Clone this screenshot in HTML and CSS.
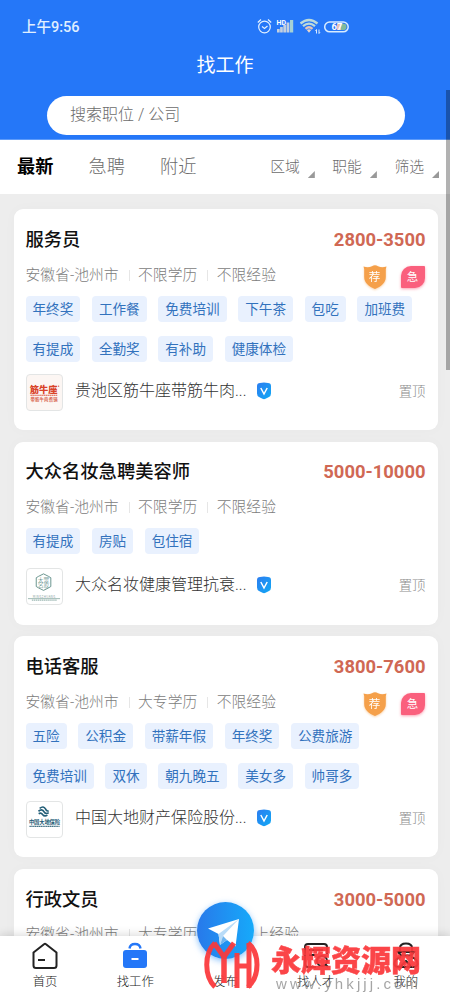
FILE: index.html
```html
<!DOCTYPE html>
<html lang="zh-CN">
<head>
<meta charset="utf-8">
<title>找工作</title>
<link rel="stylesheet" href="styles.css">
</head>
<body>
<svg class="defs" width="0" height="0" aria-hidden="true">
  <defs>
    <linearGradient id="vg" x1="0" y1="0" x2="1" y2="1"><stop offset="0" stop-color="#2d7df0"/><stop offset="1" stop-color="#10a9f5"/></linearGradient>
    <symbol id="verified" viewBox="0 0 16 18"><path d="M1 4Q1 1.2 4 1Q8 .2 12 1Q15 1.2 15 4V11.500Q15 13.800 13 15L9.500 16.800Q8 17.500 6.500 16.800L3 15Q1 13.800 1 11.500Z" fill="url(#vg)"/><path d="M4.800 6L8 12L11.200 6" fill="none" stroke="#fff" stroke-width="1.500"/></symbol>
    <symbol id="shield" viewBox="0 0 24 24"><path d="M.5 1.500Q5 3 9 1.300Q12-.7 15 1.300Q19 3 23.500 1.500L22.800 4V12C22.800 18 18 21.500 12 24C6 21.500 1.200 18 1.200 12V4Z" fill="#f5a04a"/></symbol>
  </defs>
</svg>
<div class="screen">
  <header class="header">
    <div class="status">
      <span class="clock">上午9:56</span>
      <svg class="status-icons" width="94" height="17" viewBox="0 0 94 17">
        <g fill="none" stroke="#e4f1ff" stroke-width="1.200"><circle cx="7.500" cy="9" r="5.800"/><path d="M.8 4.500L4 1.500M14.200 4.500L11 1.500M5 8.500L7.500 10.500L10.500 8"/></g>
        <g fill="#c4d0df"><path d="M20 11h2.700v3.500H20zM23.100 9h2.700v5.500h-2.700zM26.300 7h2.800v7.500h-2.800zM29.600 4.500h2.800v10h-2.800z"/><path fill="#a5d1d5" d="M33 2h3.200v12.500h-3.200z"/></g>
        <text x="19.500" y="6.500" class="hd">HD</text>
        <g fill="none" stroke="#bcdada" stroke-width="2.300"><path d="M43.500 5.500Q52-1.500 60.500 5.500"/><path d="M46 8.200Q52 3 58 8.200"/><path d="M48.500 10.800Q52 7.800 55.500 10.800" stroke="#e4c7b8"/></g><path d="M49.800 12L52 14.800L54.200 12Q52 10.500 49.800 12" fill="#e9d4c8"/>
        <path d="M59.500 15.500v-4l-1 1.300M62 11.500v4l1-1.300" stroke="#dcecff" fill="none"/>
        <rect x="67.700" y="4" width="23.500" height="9.800" rx="4.900" fill="none" stroke="#d8ecff" stroke-width="1.500"/><path d="M80 5.800h4v6.200h-4z" fill="#e5c1b5"/><path d="M84 5.800h3q2.500 0 2.500 3t-2.500 3.200h-3z" fill="#80ba9c"/>
        <text x="74.500" y="12.300" class="level">67</text>
      </svg>
    </div>
    <h1 class="title">找工作</h1>
    <div class="search">搜索职位 / 公司</div>
  </header>
  <nav class="tabs">
    <span class="tab active">最新</span><span class="tab">急聘</span><span class="tab">附近</span>
    <div class="filters"><span class="filter">区域</span><span class="filter">职能</span><span class="filter">筛选</span></div>
  </nav>
  <main class="list">
    <article class="card">
      <div class="head"><h2>服务员</h2><span class="pay">2800-3500</span></div>
      <div class="meta"><span>安徽省-池州市</span><span>不限学历</span><span>不限经验</span>
        <div class="marks"><span class="rec"><svg width="24" height="24"><use href="#shield"/></svg><b>荐</b></span><span class="urgent">急</span></div></div>
      <div class="tags"><span>年终奖</span><span>工作餐</span><span>免费培训</span><span>下午茶</span><span>包吃</span><span>加班费</span><span>有提成</span><span>全勤奖</span><span>有补助</span><span>健康体检</span></div>
      <div class="company">
        <svg class="logo cream" viewBox="0 0 36 36"><text x="2.800" y="18.800" textLength="28.500" lengthAdjust="spacingAndGlyphs" class="l-red">筋牛座</text><path d="M3.500 20.800h28" stroke="#dc5943" stroke-width="1.200" stroke-dasharray="1.600 .4"/><text x="3.500" y="26.500" textLength="28" class="l-redsub">带筋牛肉煮锅</text><circle cx="32.500" cy="11.500" r=".7" fill="#dc5943"/></svg>
        <span class="name">贵池区筋牛座带筋牛肉...</span><svg class="v" width="16" height="18"><use href="#verified"/></svg><span class="top">置顶</span>
      </div>
    </article>
    <article class="card single">
      <div class="head"><h2>大众名妆急聘美容师</h2><span class="pay">5000-10000</span></div>
      <div class="meta"><span>安徽省-池州市</span><span>不限学历</span><span>不限经验</span></div>
      <div class="tags"><span>有提成</span><span>房贴</span><span>包住宿</span></div>
      <div class="company">
        <svg class="logo" viewBox="0 0 36 36"><path d="M12 7.500L17 5L22 7.500L24.500 9V18L22 19.500L17 22L12 19.500L9.500 18V9Z" fill="none" stroke="#568680" stroke-width=".9"/><text x="11" y="13" class="l-green">大眾</text><text x="11" y="19" class="l-green">名妝</text><text x="6" y="29.500" textLength="23" class="l-tiny">MINGZHUANG</text><path d="M1 30.500h33" stroke="#83a59f" stroke-width=".8"/><path d="M5 32h26" stroke="#83a59f" stroke-dasharray="1.500 .5"/></svg>
        <span class="name">大众名妆健康管理抗衰...</span><svg class="v" width="16" height="18"><use href="#verified"/></svg><span class="top">置顶</span>
      </div>
    </article>
    <article class="card">
      <div class="head"><h2>电话客服</h2><span class="pay">3800-7600</span></div>
      <div class="meta"><span>安徽省-池州市</span><span>大专学历</span><span>不限经验</span>
        <div class="marks"><span class="rec"><svg width="24" height="24"><use href="#shield"/></svg><b>荐</b></span><span class="urgent">急</span></div></div>
      <div class="tags"><span>五险</span><span>公积金</span><span>带薪年假</span><span>年终奖</span><span>公费旅游</span><span>免费培训</span><span>双休</span><span>朝九晚五</span><span>美女多</span><span>帅哥多</span></div>
      <div class="company">
        <svg class="logo" viewBox="0 0 36 36"><g fill="none" stroke="#245f78" stroke-width="1.700"><path d="M13 6.500Q17 3.500 19 7Q20.500 10 22.300 9"/><path d="M11.800 9.500Q15.500 6.500 17.500 10Q19.500 13 22.300 11"/><path d="M12 12Q14.500 10.500 16 12.800Q18 15.500 21 13.500"/></g><text x="2" y="22.500" textLength="32" class="l-blue">中国大地保险</text><path d="M2.500 25h31" stroke="#467487" stroke-width="1.200" stroke-dasharray="1.500 .4"/></svg>
        <span class="name">中国大地财产保险股份...</span><svg class="v" width="16" height="18"><use href="#verified"/></svg><span class="top">置顶</span>
      </div>
    </article>
    <article class="card">
      <div class="head"><h2>行政文员</h2><span class="pay">3000-5000</span></div>
      <div class="meta"><span>安徽省-池州市</span><span>大专学历</span><span>1年以上经验</span></div>
    </article>
  </main>
  <footer class="bar">
    <div class="item"><svg width="28" height="28" viewBox="0 0 28 28"><path d="M2.500 10.500L13 2.200Q14 1.500 15 2.200L25.500 10.500V23.500Q25.500 26 23 26H5Q2.500 26 2.500 23.500Z" fill="none" stroke="#222" stroke-width="2" stroke-linejoin="round"/><path d="M7 18h7" stroke="#222" stroke-width="2"/></svg><span>首页</span></div>
    <div class="item"><svg width="28" height="28" viewBox="0 0 28 28"><path d="M8.500 6.500Q9 2 14 2Q19 2 19.500 6.500" fill="none" stroke="#2477f8" stroke-width="2.400"/><rect x="2" y="8" width="24" height="18" rx="3" fill="#2477f8"/><path d="M10.500 17h7" stroke="#fff" stroke-width="2"/></svg><span>找工作</span></div>
    <div class="item"><i class="blank"></i><span>发布</span></div>
    <div class="item"><svg width="28" height="28" viewBox="0 0 28 28"><g fill="none" stroke="#222" stroke-width="2"><path d="M25 12V5Q25 2 22 2H6Q3 2 3 5V22Q3 25 6 25H14M7 8h14M7 13h6"/><circle cx="20" cy="19" r="5"/><path d="M23.500 22.500L26 25"/></g></svg><span>找人才</span></div>
    <div class="item"><svg width="28" height="28" viewBox="0 0 28 28"><g fill="none" stroke="#222" stroke-width="2"><path d="M8 11V6Q8 1.500 14 1.500Q20 1.500 20 6V11M6 10h16L19 13.500H9Z"/><path d="M9 15Q2 17 2.500 22Q3 25 7 25H21Q25 25 25.500 22Q26 17 19 15M9 24L14 19L19 24"/></g></svg><span>我的</span></div>
  </footer>
  <div class="fab"><svg width="57" height="57" viewBox="0 0 57 57"><path d="M11 26.500L42 17L38.500 44.500L30 38L23 43L21.500 32Z" fill="#fff"/><path d="M42 17L21.500 32L23 43L26 34Z" fill="#b9dcf8"/><path d="M26 34L30 38L23 43Z" fill="#6fb5ef"/></svg></div>
  <div class="watermark">
    <svg width="58" height="52" viewBox="0 0 58 52"><g fill="none" stroke="#fb3a3d" stroke-width="5"><path d="M12 4C1 14 1 37 12 48"/><path d="M11 4L21 18L31 4"/><path d="M21 17V44" stroke-width="5.500"/><path d="M34 14V49M34 27H46"/><path d="M46 4V49"/><path d="M45 4C57 14 57 37 45 48"/></g></svg>
    <div class="wm-text"><strong>永辉资源网</strong><span>www.yhkjjj.com</span></div>
  </div>
  <div class="scrollbar"></div>
</div>
</body>
</html>
```
FILE: styles.css
```css
* { box-sizing: border-box; }
body { margin: 0; overflow: hidden; font-family: Roboto, "Noto Sans CJK SC", sans-serif; font-weight: 300; }
h1, h2 { margin: 0; }
.defs { position: absolute; }
.screen { position: relative; width: 450px; height: 1000px; overflow: hidden; background: #ededed; display: flex; flex-direction: column; }
.header { height: 140px; flex: none; background: #2577f8; color: #fff; border-bottom: 1px solid #5e9bfa; }
.status { height: 44px; padding: 18px 0 0 22px; display: flex; }
.clock { width: 235px; font-size: 14.500px; line-height: 20px; font-weight: 500; color: #e0efff; }
.hd { font: 700 7px Roboto, sans-serif; fill: #fff; }
.level { font: 700 9.500px Roboto, sans-serif; fill: #fff; }
.title { height: 40px; line-height: 43px; text-align: center; font-size: 19px; font-weight: 400; }
.search { margin: 12px 45px 0 47px; height: 39px; border-radius: 20px; background: #fff; padding-left: 23px; font-size: 16px; line-height: 38px; color: #6c6c6c; }
.tabs { height: 54px; flex: none; background: #fff; padding: 0 11px 0 17px; display: flex; align-items: center; }
.tab { width: 71.500px; font-size: 18.200px; line-height: 54px; color: #6c6c6c; }
.tab.active { color: #000; font-weight: 700; }
.filters { margin-left: auto; display: flex; gap: 17.500px; }
.filter { font-size: 14.800px; line-height: 54px; color: #6c6c6c; display: flex; align-items: center; gap: 8px; }
.filter::after { content: ""; width: 7px; height: 7px; margin-top: 15px; background: #999; clip-path: polygon(100% 0, 100% 100%, 0 100%); }
.list { padding: 15px 12px 0 14px; display: flex; flex-direction: column; gap: 11.500px; height: 742px; overflow: hidden; }
.card { flex: none; height: 221px; background: #fff; border-radius: 9px; padding: 15px 12.500px 0 11.500px; box-shadow: 0 0 14px rgba(0, 0, 0, .025); }
.card.single { height: 183px; padding-top: 14.500px; }
.head { display: flex; justify-content: space-between; line-height: 31px; height: 31px; }
h2 { font-size: 18.300px; font-weight: 500; color: #111; line-height: 31px; }
.pay { font-size: 18.400px; font-weight: 700; color: #d06854; }
.meta { display: flex; align-items: center; height: 41px; padding-bottom: 2px; font-size: 14.800px; color: #7c7c7c; line-height: 20px; }
.meta > span + span { margin-left: 10px; padding-left: 9.500px; background: linear-gradient(#e6e6e6, #e6e6e6) 0 5px / 1px 11px no-repeat; }
.marks { margin-left: auto; margin-right: 1px; display: flex; gap: 14px; align-items: center; padding-top: 4px; }
.rec { position: relative; width: 24px; height: 24px; display: grid; place-items: center; color: #fff; filter: drop-shadow(0 1px 1px #f5a04a77); }
.rec svg { position: absolute; inset: 0; }
.rec b { position: relative; font-size: 11.500px; line-height: 20px; font-weight: 400; }
.urgent { width: 24px; height: 22px; border-radius: 10px 1px 10px 1px; background: #fa607d; box-shadow: 0 1px 3px #fa607d99; color: #fff; font-size: 11.500px; line-height: 22px; text-align: center; font-weight: 400; }
.tags { display: flex; flex-wrap: wrap; gap: 14px 11.600px; margin-right: -8px; }
.tags span { height: 26px; border-radius: 4px; padding: 0 7px; background: #e9f1fe; color: #3272bd; font-size: 13.600px; line-height: 26px; font-weight: 400; }
.company { display: flex; align-items: center; margin-top: 12px; height: 37px; }
.single .company { margin-top: 14px; }
.logo { width: 37px; height: 37px; flex: none; border: 1px solid #e3e5e5; border-radius: 4px; background: #fff; }
.cream { background: #fcf6f3; }
.logo text { font-family: "Noto Sans CJK SC", sans-serif; }
.l-red { font-size: 9.500px; font-weight: 900; fill: #d94329; }
.l-redsub { font-size: 4.500px; font-weight: 700; fill: #d96a55; }
.l-green { font-size: 6px; fill: #34716a; }
.l-tiny { font-size: 3px; fill: #3b6964; }
.l-blue { font-size: 5.500px; font-weight: 700; fill: #225a74; }
.name { margin-left: 12.500px; padding-bottom: 3px; font-size: 16px; line-height: 24px; color: #333; white-space: nowrap; width: 171px; }
.v { margin-left: 10px; margin-top: -4px; }
.top { margin-left: auto; padding-bottom: 5px; font-size: 13.400px; color: #8c8c8c; }
.bar { height: 64px; flex: none; background: #fff; display: grid; grid-template-columns: repeat(5, 90.200px); box-shadow: 0 -1px 9px rgba(0, 0, 0, .16); position: relative; }
.item { display: flex; flex-direction: column; align-items: center; padding-top: 6px; font-size: 12.400px; line-height: 18px; color: #222; }
.item svg, .blank { display: block; width: 28px; height: 28px; margin-bottom: 3px; }
.fab { position: absolute; left: 197px; top: 902px; width: 57px; height: 57px; border-radius: 50%; background: linear-gradient(90deg, #2879ea, #16aafa); box-shadow: 0 2px 6px #3c9af899; }
.watermark { position: absolute; left: 203px; top: 939px; display: flex; opacity: .94; }
.wm-text { width: 170px; padding-left: 10px; }
.wm-text strong { display: block; font-family: "Noto Sans CJK SC", sans-serif; font-size: 30px; font-weight: 900; line-height: 38px; height: 36px; color: #fb3a3d; -webkit-text-stroke: .5px #fb3a3d; white-space: nowrap; }
.wm-text span { display: block; padding-left: 5px; font-family: "Liberation Sans", sans-serif; font-size: 15px; letter-spacing: 3.100px; line-height: 18px; color: #888; white-space: nowrap; opacity: .8; }
.scrollbar { position: absolute; right: 0; top: 90px; width: 4px; height: 280px; background: rgba(0, 0, 0, .3); }
```
